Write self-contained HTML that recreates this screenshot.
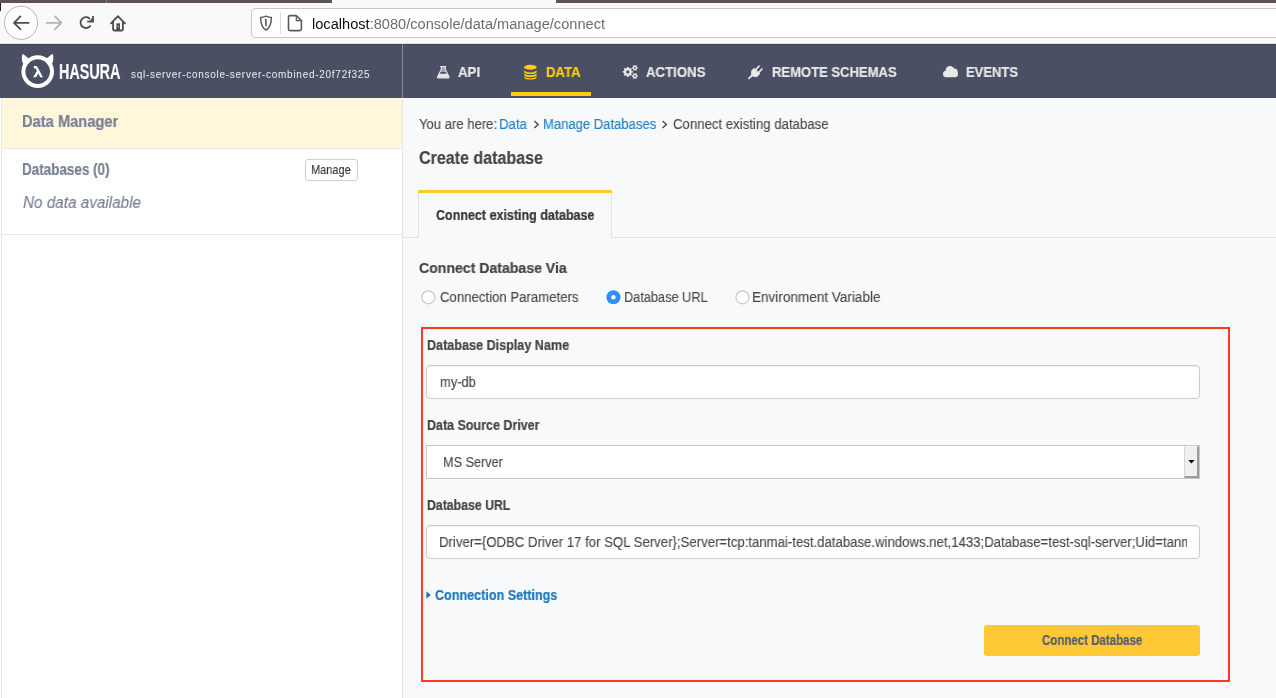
<!DOCTYPE html>
<html><head><meta charset="utf-8">
<style>
html,body{margin:0;padding:0;width:1276px;height:698px;overflow:hidden;background:#f8f9fb;font-family:"Liberation Sans",sans-serif;}
.a{position:absolute;box-sizing:border-box;}
.t{position:absolute;white-space:nowrap;transform-origin:0 0;will-change:transform;}
svg{position:absolute;overflow:visible;}
</style></head><body>
<!-- browser chrome -->
<div class="a" style="left:0;top:0;width:1276px;height:44px;background:#f9f9f9;"></div>
<div class="a" style="left:0;top:0;width:332px;height:3px;background:#5c5257;"></div>
<div class="a" style="left:556px;top:0;width:720px;height:3px;background:#5c5257;"></div>
<div class="a" style="left:106px;top:0;width:1px;height:3px;background:#8a8286;"></div>
<div class="a" style="left:0;top:3px;width:1px;height:8px;background:#222;"></div>
<div class="a" style="left:0;top:43px;width:1276px;height:1px;background:#e0e0e2;"></div>
<!-- nav buttons -->
<svg style="left:0;top:0" width="140" height="44">
  <circle cx="21" cy="22.8" r="16.6" fill="#fdfdfd" stroke="#b8b8ba" stroke-width="1"/>
  <path d="M14 22.8 H28.6 M20.4 16.4 L14 22.8 L20.4 29.2" fill="none" stroke="#4d4d50" stroke-width="1.8" stroke-linecap="round" stroke-linejoin="round"/>
  <path d="M46.5 22.8 H61.3 M55 16.4 L61.3 22.8 L55 29.2" fill="none" stroke="#b3b3b5" stroke-width="1.8" stroke-linecap="round" stroke-linejoin="round"/>
  <path d="M89.47 18.46 A5.4 5.4 0 1 0 90.14 26.07" fill="none" stroke="#4d4d50" stroke-width="1.8" stroke-linecap="round"/>
  <path d="M93.9 15.9 V22.6 H87.2 V20.8 H89.6 L92.1 18.3 V15.9 Z" fill="#4d4d50"/>
  <path d="M111 23.4 L117.9 16.2 L124.9 23.4 M113.1 21.6 V29.6 Q113.1 30.5 114 30.5 H122 Q122.9 30.5 122.9 29.6 V21.6" fill="none" stroke="#4d4d50" stroke-width="1.8" stroke-linejoin="round" stroke-linecap="round"/>
  <rect x="116.4" y="23.3" width="3.6" height="7.2" fill="#4d4d50"/>
  <circle cx="118.3" cy="26.6" r="0.6" fill="#f0f0f0"/>
</svg>
<!-- url bar -->
<div class="a" style="left:251px;top:8px;width:1030px;height:30px;background:#fff;border:1px solid #c6c6c8;border-radius:4px;"></div>
<div class="a" style="left:280px;top:12px;width:1px;height:22px;background:#dadadc;"></div>
<svg style="left:0;top:0" width="320" height="44">
  <path d="M266 16.2 C263.8 17.3 262 17.6 260.6 17.6 C260.6 24.6 262.6 28.2 266 30 C269.4 28.2 271.4 24.6 271.4 17.6 C270 17.6 268.2 17.3 266 16.2 Z" fill="none" stroke="#5b5b5f" stroke-width="1.5" stroke-linejoin="round"/>
  <path d="M265.3 19.2 L266.1 26.2 L266.1 19.2 Z" fill="#5b5b5f" stroke="#5b5b5f" stroke-width="1"/>
  <path d="M290 15.6 H296.3 L301.4 20.6 V29.1 Q301.4 30.6 299.9 30.6 H290 Q288.5 30.6 288.5 29.1 V17.1 Q288.5 15.6 290 15.6 Z" fill="none" stroke="#5b5b5f" stroke-width="1.6" stroke-linejoin="round"/>
  <path d="M296.3 15.6 V20.6 H301.4" fill="none" stroke="#5b5b5f" stroke-width="1.2"/>
</svg>
<div id="urltext" class="t" style="left:311.80px;top:16.95px;font-size:14px;line-height:14px;color:#6d6d6f;transform:scaleX(1.0427)"><span style="color:#0c0c0d">localhost</span>:8080/console/data/manage/connect</div>

<!-- hasura header -->
<div class="a" style="left:0;top:44px;width:1276px;height:54px;background:#4a4f64;"></div>
<div class="a" style="left:0;top:44px;width:1276px;height:1px;background:#3c4053;"></div>
<div class="a" style="left:402px;top:44px;width:1px;height:54px;background:#868ca3;"></div>
<svg style="left:0;top:0" width="140" height="100">
  <path d="M22.6 53.8 Q25.2 55.4 28.8 58.8 L24.2 65.5 Q21.8 62.5 21.8 58.5 Q21.9 55.6 22.6 53.8 Z" fill="#fff"/>
  <path d="M52.6 53.8 Q50 55.4 46.4 58.8 L51 65.5 Q53.4 62.5 53.4 58.5 Q53.3 55.6 52.6 53.8 Z" fill="#fff"/>
  <circle cx="37.7" cy="71.6" r="14.3" fill="none" stroke="#fff" stroke-width="4"/>
  <path d="M33.8 66 H36.9 L43 77.3 H40.2 L38.3 73.5 L36 77.3 H33.1 L36.9 70.9 L35.7 68.6 H33.8 Z" fill="#fff"/>
</svg>
<!-- nav icons -->
<svg style="left:0;top:0" width="1276" height="100">
  <!-- flask -->
  <path d="M441.6 67 H445 V69.8 L446.2 72 H440.4 L441.6 69.8 Z" fill="rgba(232,232,232,0.55)"/>
  <path d="M440.2 66.5 H446 M441.3 66.6 V69.6 L437.6 76.8 Q437.2 77.8 438.2 77.8 H448.3 Q449.3 77.8 448.9 76.8 L445.3 69.6 V66.6" fill="none" stroke="#e8e8e8" stroke-width="1.2" stroke-linejoin="round"/>
  <path d="M439.4 73.8 H447.2 L448.9 76.9 Q449.3 77.8 448.3 77.8 H438.2 Q437.2 77.8 437.7 76.9 Z" fill="#e8e8e8"/>
  <!-- database -->
  <ellipse cx="530.4" cy="67.2" rx="6.2" ry="2.5" fill="#ffcd0c"/>
  <path d="M524.2 69.6 Q524.2 72.4 530.4 72.4 Q536.6 72.4 536.6 69.6 V71.4 Q536.6 74 530.4 74 Q524.2 74 524.2 71.4 Z" fill="#ffcd0c"/>
  <path d="M524.2 72.6 Q524.2 75.3 530.4 75.3 Q536.6 75.3 536.6 72.6 V74.4 Q536.6 77 530.4 77 Q524.2 77 524.2 74.4 Z" fill="#ffcd0c"/>
  <path d="M524.2 75.5 Q524.2 78.2 530.4 78.2 Q536.6 78.2 536.6 75.5 V77.2 Q536.6 79.6 530.4 79.6 Q524.2 79.6 524.2 77.2 Z" fill="#ffcd0c"/>
  <!-- gears -->
  <g fill="#e8e8e8" fill-rule="evenodd">
  <path d="M631.59 70.97 L632.82 71.00 L632.82 72.80 L631.59 72.83 L631.13 73.92 L631.98 74.82 L630.72 76.08 L629.82 75.23 L628.73 75.69 L628.70 76.92 L626.90 76.92 L626.87 75.69 L625.78 75.23 L624.88 76.08 L623.62 74.82 L624.47 73.92 L624.01 72.83 L622.78 72.80 L622.78 71.00 L624.01 70.97 L624.47 69.88 L623.62 68.98 L624.88 67.72 L625.78 68.57 L626.87 68.11 L626.90 66.88 L628.70 66.88 L628.73 68.11 L629.82 68.57 L630.72 67.72 L631.98 68.98 L631.13 69.88 Z M629.40 71.90 A1.6 1.6 0 1 0 626.20 71.90 A1.6 1.6 0 1 0 629.40 71.90 Z"/>
  <path d="M636.99 67.21 L637.82 67.20 L637.82 68.60 L636.99 68.59 L636.54 69.36 L636.97 70.08 L635.75 70.78 L635.35 70.05 L634.45 70.05 L634.05 70.78 L632.83 70.08 L633.26 69.36 L632.81 68.59 L631.98 68.60 L631.98 67.20 L632.81 67.21 L633.26 66.44 L632.83 65.72 L634.05 65.02 L634.45 65.75 L635.35 65.75 L635.75 65.02 L636.97 65.72 L636.54 66.44 Z M635.80 67.90 A0.9 0.9 0 1 0 634.00 67.90 A0.9 0.9 0 1 0 635.80 67.90 Z"/>
  <path d="M636.99 75.31 L637.82 75.30 L637.82 76.70 L636.99 76.69 L636.54 77.46 L636.97 78.18 L635.75 78.88 L635.35 78.15 L634.45 78.15 L634.05 78.88 L632.83 78.18 L633.26 77.46 L632.81 76.69 L631.98 76.70 L631.98 75.30 L632.81 75.31 L633.26 74.54 L632.83 73.82 L634.05 73.12 L634.45 73.85 L635.35 73.85 L635.75 73.12 L636.97 73.82 L636.54 74.54 Z M635.80 76.00 A0.9 0.9 0 1 0 634.00 76.00 A0.9 0.9 0 1 0 635.80 76.00 Z"/>
  </g>
  <!-- plug -->
  <path d="M749 78.4 L752.4 75" stroke="#e8e8e8" stroke-width="1.8" stroke-linecap="round"/>
  <g transform="translate(-1.4,0.6)">
  <path d="M752.6 70.2 Q751.8 73.8 753.4 75.4 Q755 77 758.6 76.2 L761.6 73.2 L755.6 67.2 Z" fill="#e8e8e8"/>
  <path d="M756.9 69.4 L760.4 65.5 M759.8 72.3 L763.3 68.4" stroke="#e8e8e8" stroke-width="1.7" stroke-linecap="round"/>
  </g>
  <!-- cloud -->
  <g fill="#e8e8e8">
  <circle cx="946.2" cy="74.0" r="3.2"/>
  <circle cx="950.0" cy="70.4" r="4.3"/>
  <circle cx="954.4" cy="71.6" r="3.1"/>
  <circle cx="954.8" cy="74.0" r="3.2"/>
  <rect x="946.2" y="71" width="8.6" height="6.2"/>
  </g>
</svg>
<div class="a" style="left:511px;top:92px;width:80px;height:4px;background:#ffcd0c;"></div>

<!-- sidebar -->
<div class="a" style="left:0;top:98px;width:403px;height:600px;background:#fff;"></div>
<div class="a" style="left:1px;top:98px;width:402px;height:51px;background:#fff6dc;border-bottom:1px solid #ebebeb;"></div>
<div class="a" style="left:1px;top:98px;width:1px;height:600px;background:#e8e8e8;"></div>
<div class="a" style="left:402px;top:98px;width:1px;height:600px;background:#e6e6e6;"></div>
<div class="a" style="left:1px;top:234px;width:402px;height:1px;background:#e6e6e6;"></div>
<div class="a" style="left:305px;top:159px;width:53px;height:22px;background:#fff;border:1px solid #cfcfcf;border-radius:3px;"></div>

<!-- main -->
<svg style="left:0;top:0" width="1276" height="698">
  <path d="M534.4 120.9 L538.2 124.4 L534.4 127.9" fill="none" stroke="#444" stroke-width="1.3"/>
  <path d="M662.6 120.9 L666.4 124.4 L662.6 127.9" fill="none" stroke="#444" stroke-width="1.3"/>
</svg>
<div class="a" style="left:403px;top:237px;width:873px;height:1px;background:#e3e3e3;"></div>
<div class="a" style="left:418px;top:190px;width:194px;height:48px;background:#f8f9fb;border:1px solid #e3e3e3;border-top:none;border-bottom:none;"></div>
<div class="a" style="left:418px;top:190px;width:194px;height:3px;background:#fdc82a;border-radius:2px 2px 0 0;"></div>

<!-- radios -->
<svg style="left:0;top:0" width="1276" height="698">
  <circle cx="428.4" cy="297.3" r="6.5" fill="#fff" stroke="#c9c9c9" stroke-width="1.2"/>
  <circle cx="613.4" cy="297.3" r="7" fill="#2f8ef9"/>
  <circle cx="613.4" cy="297.3" r="2.2" fill="#fff"/>
  <circle cx="742.5" cy="297.3" r="6.5" fill="#fff" stroke="#c9c9c9" stroke-width="1.2"/>
</svg>

<!-- form -->
<div class="a" style="left:426px;top:365px;width:774px;height:34px;background:#fff;border:1px solid #cccccc;border-radius:4px;box-shadow:inset 0 1px 1px rgba(0,0,0,.075);"></div>
<div class="a" style="left:426px;top:445px;width:774px;height:34px;background:#fff;border:1px solid #c8c8c8;"></div>
<div class="a" style="left:1184px;top:446px;width:15px;height:32px;background:#efefef;border-left:1px solid #d6d6d6;border-top:1px solid #f4f4f4;border-right:2px solid #9c9c9c;border-bottom:2px solid #9c9c9c;"></div>
<svg style="left:0;top:0" width="1276" height="698">
  <path d="M1188.3 460 H1194.6 L1191.45 463.6 Z" fill="#000"/>
</svg>
<div class="a" style="left:426px;top:525px;width:774px;height:34px;background:#fff;border:1px solid #cccccc;border-radius:4px;box-shadow:inset 0 1px 1px rgba(0,0,0,.075);"></div>
<div class="a" style="left:440px;top:526px;width:747px;height:32px;overflow:hidden;">
  <div id="dburl" class="t" style="left:-0.94px;top:9.15px;font-size:14px;line-height:14px;color:#474747;-webkit-text-stroke:0.12px #474747;transform:scaleX(0.9413)">Driver={ODBC Driver 17 for SQL Server};Server=tcp:tanmai-test.database.windows.net,1433;Database=test-sql-server;Uid=tanmai;Pwd=password</div>
</div>
<svg style="left:0;top:0" width="1276" height="698">
  <path d="M426.4 591.3 L430.8 595 L426.4 598.7 Z" fill="#1877bb"/>
</svg>
<div class="a" style="left:984px;top:625px;width:216px;height:31px;background:#fec935;border-radius:3px;"></div>

<!-- red annotation -->
<div class="a" style="left:421px;top:327px;width:809px;height:355px;border:2px solid #ff3a1c;"></div>

<div class="t" style="left:59.15px;top:60.77px;font-size:22px;line-height:22px;font-weight:bold;font-style:normal;color:#ffffff;transform:scaleX(0.6522);-webkit-text-stroke:0.2px #fff;">HASURA</div>
<div class="t" style="left:131.00px;top:69.63px;font-size:10px;line-height:10px;font-weight:normal;font-style:normal;color:#eceef2;letter-spacing:0.727px;">sql-server-console-server-combined-20f72f325</div>
<div class="t" style="left:458.00px;top:64.95px;font-size:14px;line-height:14px;font-weight:bold;font-style:normal;color:#e8e8e8;transform:scaleX(0.9488);-webkit-text-stroke:0.2px #e8e8e8;">API</div>
<div class="t" style="left:546.00px;top:64.95px;font-size:14px;line-height:14px;font-weight:bold;font-style:normal;color:#ffcd0c;transform:scaleX(0.9375);-webkit-text-stroke:0.2px #ffcd0c;">DATA</div>
<div class="t" style="left:645.60px;top:64.95px;font-size:14px;line-height:14px;font-weight:bold;font-style:normal;color:#e8e8e8;transform:scaleX(0.9432);-webkit-text-stroke:0.2px #e8e8e8;">ACTIONS</div>
<div class="t" style="left:771.70px;top:64.95px;font-size:14px;line-height:14px;font-weight:bold;font-style:normal;color:#e8e8e8;transform:scaleX(0.9314);-webkit-text-stroke:0.2px #e8e8e8;">REMOTE SCHEMAS</div>
<div class="t" style="left:966.40px;top:64.95px;font-size:14px;line-height:14px;font-weight:bold;font-style:normal;color:#e8e8e8;transform:scaleX(0.9268);-webkit-text-stroke:0.2px #e8e8e8;">EVENTS</div>
<div class="t" style="left:21.68px;top:113.85px;font-size:16px;line-height:16px;font-weight:bold;font-style:normal;color:#767e93;transform:scaleX(0.9171);-webkit-text-stroke:0.2px #767e93;">Data Manager</div>
<div class="t" style="left:22.06px;top:162.45px;font-size:16px;line-height:16px;font-weight:bold;font-style:normal;color:#767e93;transform:scaleX(0.8411);-webkit-text-stroke:0.2px #767e93;">Databases (0)</div>
<div class="t" style="left:22.90px;top:195.25px;font-size:16px;line-height:16px;font-weight:normal;font-style:italic;color:#767e93;transform:scaleX(0.9536);-webkit-text-stroke:0.12px #767e93;">No data available</div>
<div class="t" style="left:311.45px;top:162.99px;font-size:13px;line-height:13px;font-weight:normal;font-style:normal;color:#333333;transform:scaleX(0.8459);-webkit-text-stroke:0.12px #333333;">Manage</div>
<div class="t" style="left:419.00px;top:116.85px;font-size:14px;line-height:14px;font-weight:normal;font-style:normal;color:#474747;transform:scaleX(0.9340);-webkit-text-stroke:0.12px #474747;">You are here:</div>
<div class="t" style="left:499.16px;top:116.85px;font-size:14px;line-height:14px;font-weight:normal;font-style:normal;color:#1b7ec4;transform:scaleX(0.9414);-webkit-text-stroke:0.12px #1b7ec4;">Data</div>
<div class="t" style="left:543.37px;top:116.85px;font-size:14px;line-height:14px;font-weight:normal;font-style:normal;color:#1b7ec4;transform:scaleX(0.9318);-webkit-text-stroke:0.12px #1b7ec4;">Manage Databases</div>
<div class="t" style="left:673.20px;top:116.85px;font-size:14px;line-height:14px;font-weight:normal;font-style:normal;color:#474747;transform:scaleX(0.9424);-webkit-text-stroke:0.12px #474747;">Connect existing database</div>
<div class="t" style="left:419.00px;top:149.26px;font-size:18px;line-height:18px;font-weight:bold;font-style:normal;color:#444444;transform:scaleX(0.8917);-webkit-text-stroke:0.2px #444444;">Create database</div>
<div class="t" style="left:435.70px;top:207.65px;font-size:14px;line-height:14px;font-weight:bold;font-style:normal;color:#333333;transform:scaleX(0.8931);-webkit-text-stroke:0.2px #333333;">Connect existing database</div>
<div class="t" style="left:418.90px;top:260.92px;font-size:14.5px;line-height:14.5px;font-weight:bold;font-style:normal;color:#444444;transform:scaleX(0.9714);-webkit-text-stroke:0.2px #444444;">Connect Database Via</div>
<div class="t" style="left:439.80px;top:289.75px;font-size:14px;line-height:14px;font-weight:normal;font-style:normal;color:#474747;transform:scaleX(0.9417);-webkit-text-stroke:0.12px #474747;">Connection Parameters</div>
<div class="t" style="left:624.09px;top:289.75px;font-size:14px;line-height:14px;font-weight:normal;font-style:normal;color:#474747;transform:scaleX(0.9106);-webkit-text-stroke:0.12px #474747;">Database URL</div>
<div class="t" style="left:752.03px;top:289.75px;font-size:14px;line-height:14px;font-weight:normal;font-style:normal;color:#474747;transform:scaleX(0.9673);-webkit-text-stroke:0.12px #474747;">Environment Variable</div>
<div class="t" style="left:426.60px;top:337.75px;font-size:14px;line-height:14px;font-weight:bold;font-style:normal;color:#444444;transform:scaleX(0.8996);-webkit-text-stroke:0.2px #444444;">Database Display Name</div>
<div class="t" style="left:440.20px;top:374.75px;font-size:14px;line-height:14px;font-weight:normal;font-style:normal;color:#474747;transform:scaleX(0.9230);-webkit-text-stroke:0.12px #474747;">my-db</div>
<div class="t" style="left:427.10px;top:417.85px;font-size:14px;line-height:14px;font-weight:bold;font-style:normal;color:#444444;transform:scaleX(0.8925);-webkit-text-stroke:0.2px #444444;">Data Source Driver</div>
<div class="t" style="left:442.90px;top:454.65px;font-size:14px;line-height:14px;font-weight:normal;font-style:normal;color:#474747;transform:scaleX(0.9028);-webkit-text-stroke:0.12px #474747;">MS Server</div>
<div class="t" style="left:426.80px;top:497.75px;font-size:14px;line-height:14px;font-weight:bold;font-style:normal;color:#444444;transform:scaleX(0.8777);-webkit-text-stroke:0.2px #444444;">Database URL</div>
<div class="t" style="left:435.40px;top:588.35px;font-size:14px;line-height:14px;font-weight:bold;font-style:normal;color:#1877bb;transform:scaleX(0.8986);-webkit-text-stroke:0.2px #1877bb;">Connection Settings</div>
<div class="t" style="left:1041.70px;top:632.75px;font-size:14px;line-height:14px;font-weight:bold;font-style:normal;color:#555c6e;transform:scaleX(0.8214);-webkit-text-stroke:0.2px #555c6e;">Connect Database</div>
</body></html>
